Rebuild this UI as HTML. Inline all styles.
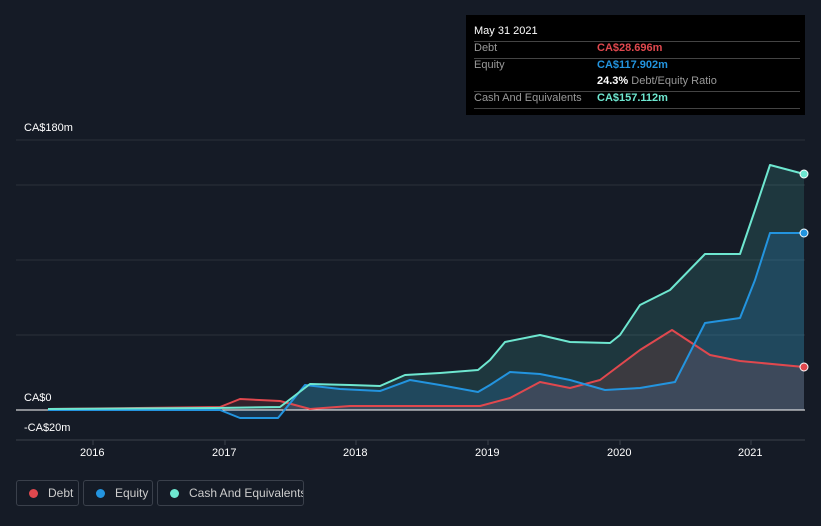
<!DOCTYPE html><html><head><style>
body{margin:0;background:#151b26;width:821px;height:526px;overflow:hidden;font-family:"Liberation Sans",sans-serif;position:relative}
.t{position:absolute;color:#fff;font-size:11px}
.tip{position:absolute;left:466px;top:15px;width:339px;height:100px;background:#000;}
.tip div{position:absolute;font-size:11px;white-space:nowrap}
.hr{position:absolute;left:8px;width:326px;height:1px;background:#444}
.leg{position:absolute;top:480px;height:26px;border:1px solid #3a404b;border-radius:3px;color:#ccc;font-size:12px;line-height:24px;box-sizing:border-box;white-space:nowrap;overflow:hidden}
.leg i{display:inline-block;width:9px;height:9px;border-radius:50%;margin:0 10px 0 12px;vertical-align:-1px}
</style></head><body>
<svg width="821" height="526" style="position:absolute;left:0;top:0">
<g stroke="#2a303b" stroke-width="1">
<line x1="16" y1="140" x2="805" y2="140"/><line x1="16" y1="185" x2="805" y2="185"/><line x1="16" y1="260" x2="805" y2="260"/><line x1="16" y1="335" x2="805" y2="335"/>
</g>
<line x1="16" y1="440" x2="805" y2="440" stroke="#3a404b"/>
<g stroke="#3a404b"><line x1="93" y1="440" x2="93" y2="445"/><line x1="225" y1="440" x2="225" y2="445"/><line x1="356" y1="440" x2="356" y2="445"/><line x1="488" y1="440" x2="488" y2="445"/><line x1="620" y1="440" x2="620" y2="445"/><line x1="751" y1="440" x2="751" y2="445"/></g>
<polygon fill="rgba(90,220,200,0.15)" points="48,409 215,408 280,407 310,384 350,385 380,386 405,375 440,373 478,370 490,360 505,342 540,335 570,342 610,343 620,335 640,305 670,290 705,254 740,254 755,210 770,165 804,174 804,410 48,410"/>
<polygon fill="rgba(40,140,220,0.2)" points="48,410 220,410 240,418 278,418 305,385 340,389 380,391 410,380 440,385 478,392 490,385 510,372 540,374 570,380 605,390 640,388 675,382 705,323 740,318 755,280 770,233 804,233 804,410"/>
<polygon fill="rgba(230,80,80,0.15)" points="48,409 220,407 240,399 280,401 310,409 350,406 480,406 510,398 540,382 570,388 600,380 640,350 672,330 710,355 740,361 804,367 804,410 48,410"/>
<line x1="16" y1="410" x2="805" y2="410" stroke="#fff" stroke-width="1"/>
<g fill="none" stroke-width="2" stroke-linejoin="round">
<polyline stroke="#e0484e" points="48,409 220,407 240,399 280,401 310,409 350,406 480,406 510,398 540,382 570,388 600,380 640,350 672,330 710,355 740,361 804,367"/>
<polyline stroke="#2394df" points="48,410 220,410 240,418 278,418 305,385 340,389 380,391 410,380 440,385 478,392 490,385 510,372 540,374 570,380 605,390 640,388 675,382 705,323 740,318 755,280 770,233 804,233"/>
<polyline stroke="#6ee7d0" points="48,409 215,408 280,407 310,384 350,385 380,386 405,375 440,373 478,370 490,360 505,342 540,335 570,342 610,343 620,335 640,305 670,290 705,254 740,254 755,210 770,165 804,174"/>
</g>
<circle cx="804" cy="367" r="4" fill="#e0484e" stroke="#fff"/><circle cx="804" cy="233" r="4" fill="#2394df" stroke="#fff"/><circle cx="804" cy="174" r="4" fill="#6ee7d0" stroke="#fff"/>
</svg>
<div class="t" style="left:24px;top:122px">CA$180m</div>
<div class="t" style="left:24px;top:392px">CA$0</div>
<div class="t" style="left:24px;top:422px">-CA$20m</div>
<div class="t" style="left:80px;top:447px">2016</div><div class="t" style="left:212px;top:447px">2017</div><div class="t" style="left:343px;top:447px">2018</div><div class="t" style="left:475px;top:447px">2019</div><div class="t" style="left:607px;top:447px">2020</div><div class="t" style="left:738px;top:447px">2021</div>
<div class="tip">
<div style="left:8px;top:10px;color:#fff">May 31 2021</div>
<div class="hr" style="top:26px"></div>
<div style="left:8px;top:27px;color:#999">Debt</div><div style="left:131px;top:27px;color:#e0484e;font-weight:bold">CA$28.696m</div>
<div class="hr" style="top:43px"></div>
<div style="left:8px;top:44px;color:#999">Equity</div><div style="left:131px;top:44px;color:#2394df;font-weight:bold">CA$117.902m</div>
<div style="left:131px;top:60px;color:#999"><b style="color:#fff">24.3%</b> Debt/Equity Ratio</div>
<div class="hr" style="top:76px"></div>
<div style="left:8px;top:77px;color:#999">Cash And Equivalents</div><div style="left:131px;top:77px;color:#6ee7d0;font-weight:bold">CA$157.112m</div>
<div class="hr" style="top:93px"></div>
</div>
<div class="leg" style="left:16px;width:63px"><i style="background:#e0484e"></i>Debt</div>
<div class="leg" style="left:83px;width:70px"><i style="background:#2394df"></i>Equity</div>
<div class="leg" style="left:157px;width:147px"><i style="background:#6ee7d0"></i>Cash And Equivalents</div>
</body></html>
